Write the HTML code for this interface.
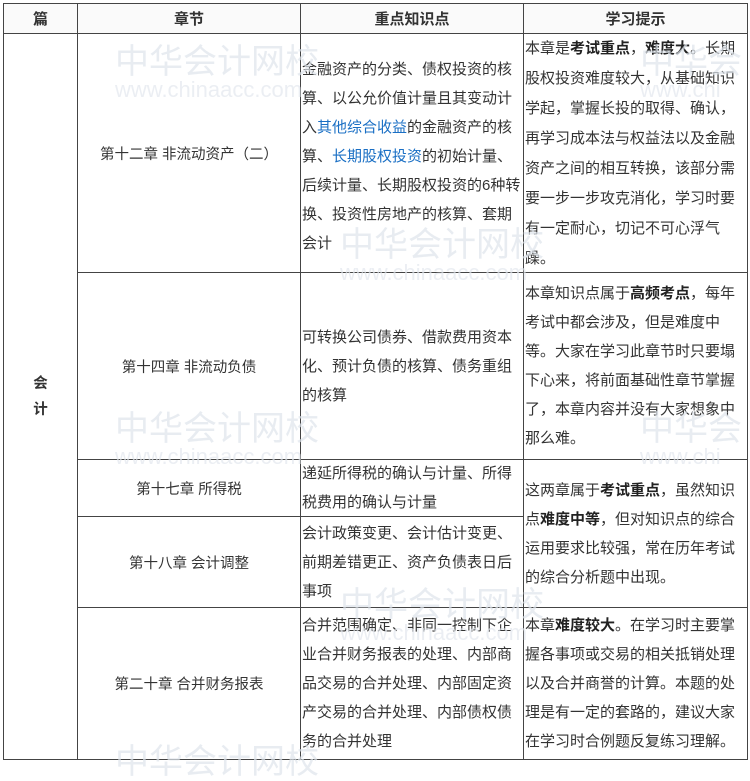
<!DOCTYPE html>
<html><head><meta charset="utf-8"><style>
*{margin:0;padding:0;box-sizing:border-box}
body{width:750px;height:766px;background:#fff;position:relative;overflow:hidden;font-family:"Liberation Sans","Noto Sans CJK SC",sans-serif;font-size:15px;color:#333}
.c{position:absolute;display:flex;align-items:center;border:1px solid #444;margin:-1px 0 0 -1px}
.h{justify-content:center;font-weight:bold;font-size:15px;background:#fafafa}
.m{justify-content:center;text-align:center;font-size:14.5px}
.t{padding:0 1px;line-height:29px}
b{font-weight:bold;color:#222}
.blue{color:#1a6fc4}
.wm{position:absolute;color:#dfe5ec;font-size:34px;line-height:34px;white-space:nowrap;z-index:5;pointer-events:none;opacity:.7}
.wm small{display:block;font-size:22px;line-height:22px;color:#e3e8ee}
</style></head><body>
<div class="c h" style="left:4px;top:4px;width:75px;height:31px">篇</div>
<div class="c h" style="left:78px;top:4px;width:224px;height:31px">章节</div>
<div class="c h" style="left:301px;top:4px;width:224px;height:31px">重点知识点</div>
<div class="c h" style="left:524px;top:4px;width:225px;height:31px">学习提示</div>

<div class="c m" style="left:4px;top:34px;width:75px;height:727px;font-weight:bold;line-height:26px"><span>会<br>计</span></div>

<div class="c m" style="left:78px;top:34px;width:224px;height:240px">第十二章 非流动资产（二）</div>
<div class="c t" style="left:301px;top:34px;width:224px;height:240px;padding-top:6px"><span>金融资产的分类、债权投资的核算、以公允价值计量且其变动计入<span class="blue">其他综合收益</span>的金融资产的核算、<span class="blue">长期股权投资</span>的初始计量、后续计量、长期股权投资的6种转换、投资性房地产的核算、套期会计</span></div>
<div class="c t" style="left:524px;top:34px;width:225px;height:240px;align-items:flex-start;line-height:30px"><span>本章是<b>考试重点</b>，<b>难度大</b>。长期股权投资难度较大，从基础知识学起，掌握长投的取得、确认，再学习成本法与权益法以及金融资产之间的相互转换，该部分需要一步一步攻克消化，学习时要有一定耐心，切记不可心浮气躁。</span></div>

<div class="c m" style="left:78px;top:273px;width:224px;height:188px">第十四章 非流动负债</div>
<div class="c t" style="left:301px;top:273px;width:224px;height:188px"><span>可转换公司债券、借款费用资本化、预计负债的核算、债务重组的核算</span></div>
<div class="c t" style="left:524px;top:273px;width:225px;height:188px"><span>本章知识点属于<b>高频考点</b>，每年考试中都会涉及，但是难度中等。大家在学习此章节时只要塌下心来，将前面基础性章节掌握了，本章内容并没有大家想象中那么难。</span></div>

<div class="c m" style="left:78px;top:460px;width:224px;height:58px">第十七章 所得税</div>
<div class="c t" style="left:301px;top:460px;width:224px;height:58px"><span>递延所得税的确认与计量、所得税费用的确认与计量</span></div>
<div class="c t" style="left:524px;top:460px;width:225px;height:149px"><span>这两章属于<b>考试重点</b>，虽然知识点<b>难度中等</b>，但对知识点的综合运用要求比较强，常在历年考试的综合分析题中出现。</span></div>

<div class="c m" style="left:78px;top:517px;width:224px;height:92px">第十八章 会计调整</div>
<div class="c t" style="left:301px;top:517px;width:224px;height:92px"><span>会计政策变更、会计估计变更、前期差错更正、资产负债表日后事项</span></div>

<div class="c m" style="left:78px;top:608px;width:224px;height:153px">第二十章 合并财务报表</div>
<div class="c t" style="left:301px;top:608px;width:224px;height:153px"><span>合并范围确定、非同一控制下企业合并财务报表的处理、内部商品交易的合并处理、内部固定资产交易的合并处理、内部债权债务的合并处理</span></div>
<div class="c t" style="left:524px;top:608px;width:225px;height:153px"><span>本章<b>难度较大</b>。在学习时主要掌握各事项或交易的相关抵销处理以及合并商誉的计算。本题的处理是有一定的套路的，建议大家在学习时合例题反复练习理解。</span></div>

<div class="wm" style="left:115px;top:45px">中华会计网校<small>www.chinaacc.com</small></div>
<div class="wm" style="left:340px;top:228px">中华会计网校<small>www.chinaacc.com</small></div>
<div class="wm" style="left:115px;top:412px">中华会计网校<small>www.chinaacc.com</small></div>
<div class="wm" style="left:340px;top:588px">中华会计网校<small>www.chinaacc.com</small></div>
<div class="wm" style="left:115px;top:745px">中华会计网校</div>
<div class="wm" style="left:640px;top:45px">中华会<small>www.chi</small></div>
<div class="wm" style="left:640px;top:412px">中华会<small>www.chi</small></div>
</body></html>
